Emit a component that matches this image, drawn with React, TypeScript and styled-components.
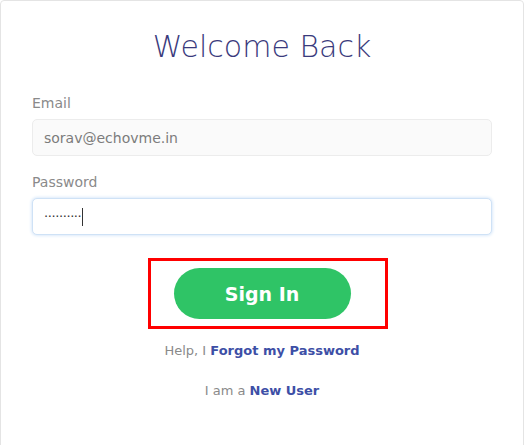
import React from "react";
import styled, { createGlobalStyle } from "styled-components";

const GlobalStyle = createGlobalStyle`
  html, body {
    margin: 0;
    padding: 0;
    background: #fff;
    font-family: "DejaVu Sans", "Noto Sans", sans-serif;
  }
`;

const Card = styled.div`
  box-sizing: border-box;
  width: 524px;
  min-height: 460px;
  border: 1px solid #e4e4e4;
  border-radius: 4px;
  padding: 26px 31px 0;
  background: #fff;
`;

const Title = styled.h1`
  margin: 0 0 27px;
  text-align: center;
  font-size: 30px;
  line-height: 40px;
  font-weight: 200;
  color: #3a3a7c;
`;

const Group = styled.div`
  display: flex;
  flex-direction: column;
  gap: 7px;
  margin-bottom: 17px;
`;

const Label = styled.label`
  font-size: 14px;
  line-height: 18px;
  font-weight: 400;
  color: #8a8a8a;
`;

const Field = styled.div<{ $focused?: boolean }>`
  box-sizing: border-box;
  display: flex;
  align-items: center;
  height: 37px;
  padding: 0 11px;
  border-radius: 5px;
  border: 1px solid ${(p) => (p.$focused ? "#cfe2f6" : "#ececec")};
  background: ${(p) => (p.$focused ? "#fff" : "#fafafa")};
  box-shadow: ${(p) => (p.$focused ? "0 0 3px 1px #dceafa" : "none")};
  font-size: 14px;
  font-weight: 400;
  color: #7c7c7c;
`;

const Dots = styled.span`
  font-size: 13px;
  letter-spacing: -0.4px;
  color: #333;
`;

const Caret = styled.span`
  display: inline-block;
  width: 1px;
  height: 18px;
  margin-left: 1px;
  background: #333;
`;

const Actions = styled.div`
  display: flex;
  flex-direction: column;
  align-items: center;
  margin-top: 23px;
`;

/* red annotation frame around the button, sits a little right of centre */
const Highlight = styled.div`
  box-sizing: border-box;
  width: 240px;
  height: 71px;
  margin-left: 11px;
  padding-left: 23px;
  border: 3px solid #ff0000;
  display: flex;
  align-items: center;
  justify-content: flex-start;
`;

const Button = styled.button`
  width: 177px;
  height: 51px;
  border: none;
  border-radius: 26px;
  background: #2fc466;
  color: #fff;
  font-family: inherit;
  font-size: 19px;
  font-weight: 700;
  cursor: pointer;
`;

const Line = styled.p<{ $gap: number }>`
  margin: ${(p) => p.$gap}px 0 0;
  font-size: 13px;
  line-height: 18px;
  font-weight: 400;
  color: #8a8a8a;
`;

const Link = styled.a`
  color: #3d4fa6;
  font-weight: 700;
  text-decoration: none;
`;

export default function App() {
  return (
    <>
      <GlobalStyle />
      <Card>
        <Title>Welcome Back</Title>
        <Group>
          <Label>Email</Label>
          <Field>sorav@echovme.in</Field>
        </Group>
        <Group>
          <Label>Password</Label>
          <Field $focused>
            <Dots>··········</Dots>
            <Caret />
          </Field>
        </Group>
        <Actions>
          <Highlight>
            <Button>Sign In</Button>
          </Highlight>
          <Line $gap={13}>
            Help, I <Link href="#">Forgot my Password</Link>
          </Line>
          <Line $gap={22}>
            I am a <Link href="#">New User</Link>
          </Line>
        </Actions>
      </Card>
    </>
  );
}
